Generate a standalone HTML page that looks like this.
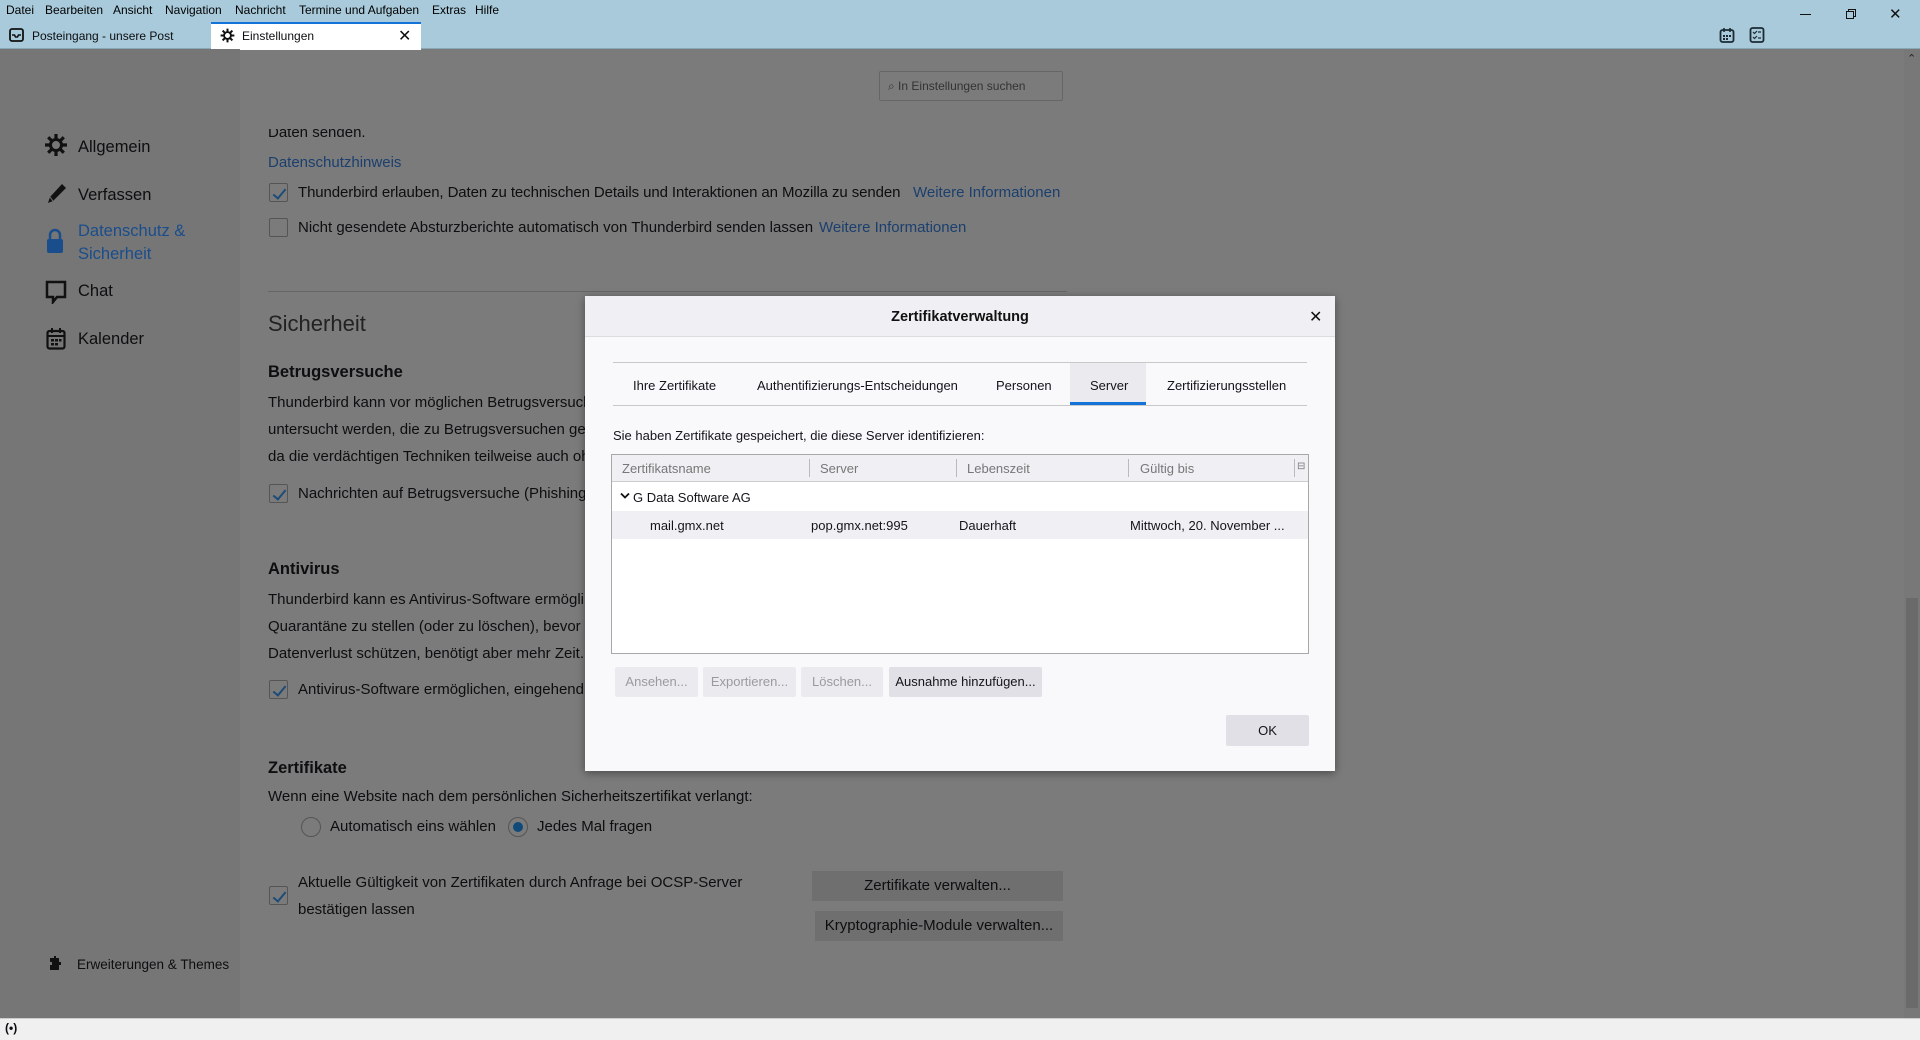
<!DOCTYPE html>
<html><head><meta charset="utf-8"><style>
*{margin:0;padding:0;box-sizing:border-box}
body{width:1920px;height:1040px;overflow:hidden;background:#7b7b7b;font-family:"Liberation Sans",sans-serif;color:#0e0e10;position:relative}
.a{position:absolute;white-space:nowrap}
#top{position:absolute;left:0;top:0;width:1920px;height:49px;background:#a8cadb;border-bottom:1px solid #8aa7b5}
.menu{font-size:12px;top:3px;color:#000}
.side{position:absolute;left:0;top:49px;width:240px;height:969px;background:#767676}
.si{font-size:16.5px;color:#0e0e10}
.c{font-size:15px}
.lnk{color:#1b3f6e}
.cb{position:absolute;width:19px;height:19px;border:1px solid #555;border-radius:2px}
.cb.on::after{content:"";position:absolute;left:6px;top:2px;width:5px;height:11px;border:solid #1c4c78;border-width:0 2px 2px 0;transform:rotate(40deg)}
.btn{position:absolute;background:#6f6f6f;font-size:15px;text-align:center;color:#0e0e10}
#dlg{position:absolute;left:585px;top:296px;width:750px;height:475px;background:#f9f9fb;box-shadow:0 2px 8px rgba(0,0,0,.4);font-size:13px;color:#15141a}
.dh{position:absolute;left:0;top:0;width:750px;height:41px;background:#f0f0f4;border-bottom:1px solid #dcdcdc}
.db{position:absolute;height:30px;background:#ebebef;color:#9b9b9f;font-size:13px;text-align:center;line-height:30px;border-radius:2px}
</style></head><body>
<svg width="0" height="0" style="position:absolute"><defs><g id="gear"><circle cx="12" cy="12" r="5.5" fill="none" stroke="currentColor" stroke-width="3"/><g stroke="currentColor" stroke-width="3.2"><path d="M12 1v5M12 18v5M1 12h5M18 12h5M4.2 4.2l3.5 3.5M16.3 16.3l3.5 3.5M4.2 19.8l3.5-3.5M16.3 7.7l3.5-3.5"/></g></g></defs></svg>
<div id="top"></div>
<div class="a menu" style="left:6px">Datei</div>
<div class="a menu" style="left:45px">Bearbeiten</div>
<div class="a menu" style="left:113px">Ansicht</div>
<div class="a menu" style="left:165px">Navigation</div>
<div class="a menu" style="left:235px">Nachricht</div>
<div class="a menu" style="left:299px">Termine und Aufgaben</div>
<div class="a menu" style="left:432px">Extras</div>
<div class="a menu" style="left:475px">Hilfe</div>
<svg class="a" style="left:9px;top:28px" width="15" height="14" viewBox="0 0 15 14"><rect x="1" y="1" width="13" height="12" rx="2" fill="none" stroke="#111" stroke-width="1.8"/><path d="M3 7h2.5l1 2h2l1-2H12" fill="none" stroke="#111" stroke-width="1.6"/></svg>
<div class="a" style="left:32px;top:29px;font-size:12px">Posteingang - unsere Post</div>
<div class="a" style="left:211px;top:22px;width:210px;height:28px;background:#fff;border-top:2px solid #1373d9"></div>
<svg class="a" style="left:220px;top:28px;color:#111" width="15" height="15" viewBox="0 0 24 24"><use href="#gear"/></svg>
<div class="a" style="left:242px;top:29px;font-size:12px">Einstellungen</div>
<div class="a" style="left:398px;top:26px;font-size:16px">✕</div>
<svg class="a" style="left:1719px;top:27px" width="16" height="16" viewBox="0 0 16 16"><rect x="1.5" y="3" width="13" height="12" rx="2" fill="none" stroke="#1b2a33" stroke-width="1.8"/><path d="M5 1v4M11 1v4" stroke="#1b2a33" stroke-width="1.6"/><path d="M4 8h2v2H4zM7 8h2v2H7zM10 8h2v2h-2zM4 11h2v2H4zM7 11h2v2H7z" fill="#1b2a33"/></svg>
<svg class="a" style="left:1749px;top:27px" width="16" height="16" viewBox="0 0 16 16"><rect x="1.5" y="1" width="13" height="14" rx="2" fill="none" stroke="#1b2a33" stroke-width="1.8"/><path d="M4 5l1.5 1.5L8 4M9 5h3M4 10l1.5 1.5L8 9M9 11h3" fill="none" stroke="#1b2a33" stroke-width="1.2"/></svg>
<div class="a" style="left:1800px;top:14px;width:11px;height:1px;background:#111"></div>
<div class="a" style="left:1846px;top:11px;width:8px;height:8px;border:1px solid #111;box-shadow:2px -2px 0 -1px #a8cadb,2px -2px 0 0 #111"></div>
<div class="a" style="left:1889px;top:5px;font-size:15px;color:#111">✕</div>

<div class="side"></div>
<div class="a" style="left:1904px;top:49px;width:16px;height:969px;background:#787878"></div>
<div class="a" style="left:1906px;top:598px;width:12px;height:410px;background:#6a6a6a"></div>
<div class="a" style="left:1907px;top:52px;font-size:11px;color:#222">⌃</div>
<div class="a" style="left:0;top:1018px;width:1920px;height:22px;background:#f0f0f0;border-top:1px solid #ccc"></div>
<div class="a" style="left:5px;top:1021px;font-size:12px;font-weight:bold">(•)</div>

<svg class="a" style="left:44px;top:133px;color:#111" width="24" height="24" viewBox="0 0 24 24"><use href="#gear"/></svg>
<div class="a si" style="left:78px;top:138px">Allgemein</div>
<svg class="a" style="left:45px;top:181px" width="24" height="24" viewBox="0 0 24 24"><path d="M3 22l2-6L17 3l4 4L8 20z" fill="#111"/><path d="M5 16l3 4" stroke="#767676" stroke-width="1"/></svg>
<div class="a si" style="left:78px;top:186px">Verfassen</div>
<svg class="a" style="left:46px;top:228px" width="18" height="26" viewBox="0 0 18 26"><path d="M4 11V7a5 5 0 0 1 10 0v4" fill="none" stroke="#1a4d8c" stroke-width="2.5"/><rect x="1" y="11" width="16" height="14" rx="2" fill="#1a4d8c"/></svg>
<div class="a si" style="left:78px;top:222px;color:#1a4d8c">Datenschutz &amp;</div>
<div class="a si" style="left:78px;top:245px;color:#1a4d8c">Sicherheit</div>
<svg class="a" style="left:45px;top:280px" width="22" height="24" viewBox="0 0 22 24"><path d="M2 2h18v15h-8l-4 5v-5H2z" fill="none" stroke="#111" stroke-width="2.5"/></svg>
<div class="a si" style="left:78px;top:282px">Chat</div>
<svg class="a" style="left:46px;top:327px" width="20" height="23" viewBox="0 0 20 23"><rect x="1.5" y="4" width="17" height="17.5" rx="2" fill="none" stroke="#111" stroke-width="2.2"/><path d="M6 1v5M14 1v5M1.5 9h17" stroke="#111" stroke-width="2"/><path d="M5 12h3v2.5H5zM9 12h3v2.5H9zM13 12h2.5v2.5H13zM5 16h3v2.5H5zM9 16h3v2.5H9z" fill="#111"/></svg>
<div class="a si" style="left:78px;top:330px">Kalender</div>
<svg class="a" style="left:47px;top:955px" width="16" height="16" viewBox="0 0 16 16"><path d="M5 3h2V1h2v2h3v4h2v3h-2v5H3v-5h2V7H3V3z" fill="#111"/></svg>
<div class="a" style="left:77px;top:957px;font-size:13.5px">Erweiterungen &amp; Themes</div>

<div class="a" style="left:879px;top:71px;width:184px;height:30px;border:1px solid #666;border-radius:2px"></div>
<div class="a" style="left:888px;top:79px;font-size:12px;color:#333">⌕ In Einstellungen suchen</div>

<div class="a c" style="left:268px;top:124px;clip-path:inset(5px 0 0 0)">Daten senden.</div>
<div class="a c lnk" style="left:268px;top:154px">Datenschutzhinweis</div>
<div class="cb on" style="left:269px;top:183px"></div>
<div class="a c" style="left:298px;top:184px;letter-spacing:-0.1px">Thunderbird erlauben, Daten zu technischen Details und Interaktionen an Mozilla zu senden</div>
<div class="a c lnk" style="left:913px;top:184px">Weitere Informationen</div>
<div class="cb" style="left:269px;top:218px"></div>
<div class="a c" style="left:298px;top:219px">Nicht gesendete Absturzberichte automatisch von Thunderbird senden lassen</div>
<div class="a c lnk" style="left:819px;top:219px">Weitere Informationen</div>
<div class="a" style="left:268px;top:291px;width:799px;height:1px;background:#666"></div>
<div class="a" style="left:268px;top:311px;font-size:22px;font-weight:300;color:#222">Sicherheit</div>
<div class="a c" style="left:268px;top:363px;font-size:16.5px;font-weight:bold">Betrugsversuche</div>
<div class="a c" style="left:268px;top:394px">Thunderbird kann vor möglichen Betrugsversuchen</div>
<div class="a c" style="left:268px;top:421px">untersucht werden, die zu Betrugsversuchen gen</div>
<div class="a c" style="left:268px;top:448px">da die verdächtigen Techniken teilweise auch oh</div>
<div class="cb on" style="left:269px;top:484px"></div>
<div class="a c" style="left:298px;top:485px">Nachrichten auf Betrugsversuche (Phishing)</div>
<div class="a c" style="left:268px;top:560px;font-size:16.5px;font-weight:bold">Antivirus</div>
<div class="a c" style="left:268px;top:591px">Thunderbird kann es Antivirus-Software ermögli</div>
<div class="a c" style="left:268px;top:618px">Quarantäne zu stellen (oder zu löschen), bevor d</div>
<div class="a c" style="left:268px;top:645px">Datenverlust schützen, benötigt aber mehr Zeit.</div>
<div class="cb on" style="left:269px;top:680px"></div>
<div class="a c" style="left:298px;top:681px">Antivirus-Software ermöglichen, eingehend</div>
<div class="a c" style="left:268px;top:759px;font-size:16.5px;font-weight:bold">Zertifikate</div>
<div class="a c" style="left:268px;top:788px">Wenn eine Website nach dem persönlichen Sicherheitszertifikat verlangt:</div>
<div class="a" style="left:301px;top:817px;width:20px;height:20px;border:1px solid #555;border-radius:50%"></div>
<div class="a c" style="left:330px;top:818px">Automatisch eins wählen</div>
<div class="a" style="left:508px;top:817px;width:20px;height:20px;border:1px solid #555;border-radius:50%"><div style="margin:4px;width:10px;height:10px;border-radius:50%;background:#0f4a78"></div></div>
<div class="a c" style="left:537px;top:818px">Jedes Mal fragen</div>
<div class="cb on" style="left:269px;top:886px"></div>
<div class="a c" style="left:298px;top:874px">Aktuelle Gültigkeit von Zertifikaten durch Anfrage bei OCSP-Server</div>
<div class="a c" style="left:298px;top:901px">bestätigen lassen</div>
<div class="btn" style="left:812px;top:871px;width:251px;height:30px;line-height:30px">Zertifikate verwalten...</div>
<div class="btn" style="left:815px;top:911px;width:248px;height:30px;line-height:30px">Kryptographie-Module verwalten...</div>

<div id="dlg">
<div class="dh"></div>
<div class="a" style="left:0;width:750px;text-align:center;top:13px;font-size:14.5px;font-weight:bold;color:#111">Zertifikatverwaltung</div>
<div class="a" style="left:724px;top:11px;font-size:16px;color:#111">✕</div>
<div class="a" style="left:28px;top:66px;width:694px;height:1px;background:#c8c8c8"></div>
<div class="a" style="left:28px;top:109px;width:694px;height:1px;background:#c8c8c8"></div>
<div class="a" style="left:485px;top:67px;width:76px;height:42px;background:#ebebef;border-bottom:3px solid #1373d9"></div>
<div class="a" style="left:48px;top:82px">Ihre Zertifikate</div>
<div class="a" style="left:172px;top:82px">Authentifizierungs-Entscheidungen</div>
<div class="a" style="left:411px;top:82px">Personen</div>
<div class="a" style="left:505px;top:82px">Server</div>
<div class="a" style="left:582px;top:82px">Zertifizierungsstellen</div>
<div class="a" style="left:28px;top:132px">Sie haben Zertifikate gespeichert, die diese Server identifizieren:</div>
<div class="a" style="left:26px;top:158px;width:698px;height:200px;background:#fff;border:1px solid #a8a8a8">
 <div class="a" style="left:0;top:0;width:696px;height:27px;background:#f0f0f4;border-bottom:1px solid #ccc"></div>
 <div class="a" style="left:10px;top:6px;color:#777">Zertifikatsname</div>
 <div class="a" style="left:197px;top:4px;width:1px;height:18px;background:#bbb"></div>
 <div class="a" style="left:208px;top:6px;color:#777">Server</div>
 <div class="a" style="left:344px;top:4px;width:1px;height:18px;background:#bbb"></div>
 <div class="a" style="left:355px;top:6px;color:#777">Lebenszeit</div>
 <div class="a" style="left:516px;top:4px;width:1px;height:18px;background:#bbb"></div>
 <div class="a" style="left:528px;top:6px;color:#777">Gültig bis</div>
 <div class="a" style="left:682px;top:4px;width:1px;height:18px;background:#bbb"></div>
 <div class="a" style="left:685px;top:6px;font-size:10px;color:#777">⊟</div>
 <svg class="a" style="left:8px;top:37px" width="10" height="8" viewBox="0 0 10 8"><path d="M1 1.5l4 4 4-4" fill="none" stroke="#111" stroke-width="1.8"/></svg>
 <div class="a" style="left:21px;top:35px">G Data Software AG</div>
 <div class="a" style="left:0;top:56px;width:696px;height:28px;background:#f0f0f4"></div>
 <div class="a" style="left:38px;top:63px">mail.gmx.net</div>
 <div class="a" style="left:199px;top:63px">pop.gmx.net:995</div>
 <div class="a" style="left:347px;top:63px">Dauerhaft</div>
 <div class="a" style="left:518px;top:63px">Mittwoch, 20. November ...</div>
</div>
<div class="db" style="left:30px;top:371px;width:83px">Ansehen...</div>
<div class="db" style="left:118px;top:371px;width:93px">Exportieren...</div>
<div class="db" style="left:216px;top:371px;width:82px">Löschen...</div>
<div class="db" style="left:304px;top:371px;width:153px;background:#e0e0e6;color:#15141a">Ausnahme hinzufügen...</div>
<div class="db" style="left:641px;top:419px;width:83px;height:31px;background:#e0e0e6;color:#15141a;line-height:31px">OK</div>
</div>
</body></html>
